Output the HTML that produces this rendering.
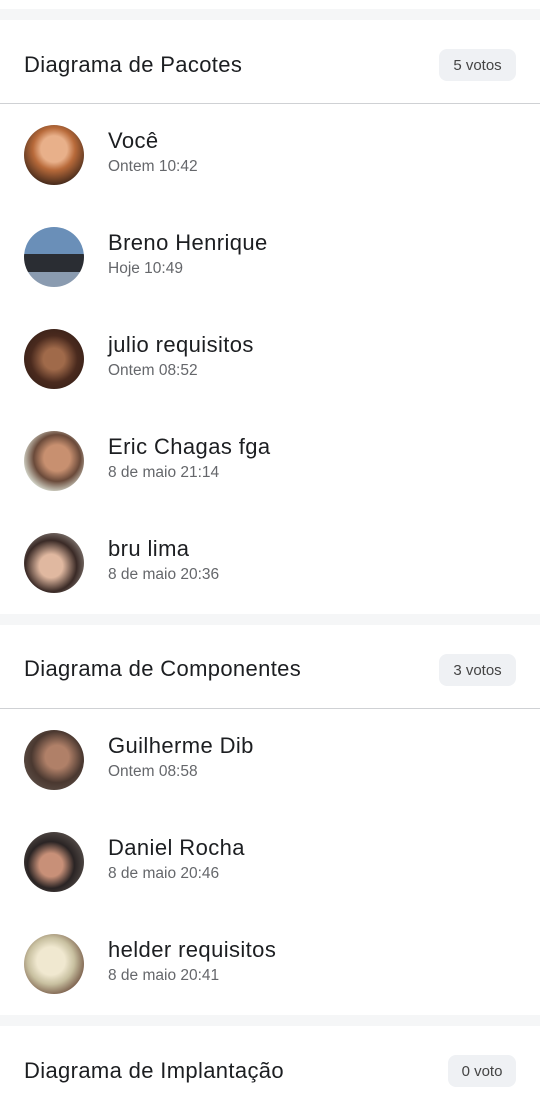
<!DOCTYPE html>
<html><head><meta charset="utf-8"><style>
*{margin:0;padding:0;box-sizing:border-box}
body{width:540px;height:1102px;background:#fff;font-family:"Liberation Sans",Roboto,sans-serif;position:relative;overflow:hidden;color:#1c1e21}
.band{position:absolute;left:0;width:540px;height:11px;background:#f5f6f7}
.hdr{position:absolute;left:24px;font-size:22px;letter-spacing:0.35px;color:#1c1e21;line-height:24px}
.badge{position:absolute;right:24px;height:32px;border-radius:8px;background:#eff1f4;font-size:15px;color:#444;line-height:33px;text-align:center}
.div{position:absolute;left:0;width:540px;height:1px;background:#cfd1d4}
.row{position:absolute;left:24px;height:60px;width:500px}
.av{position:absolute;left:0;top:0;width:60px;height:60px;border-radius:50%}
.nm{position:absolute;left:84px;top:3px;font-size:22px;letter-spacing:0.4px;color:#1c1e21;line-height:26px}
.tm{position:absolute;left:84px;top:32px;font-size:15.5px;color:#65676b;line-height:20px}
</style></head><body>
<div class="band" style="top:9px"></div>
<div class="hdr" style="top:53px">Diagrama de Pacotes</div>
<div class="badge" style="top:49px;width:77px">5 votos</div>
<div class="div" style="top:103px"></div>

<div class="row" style="top:125px"><div class="av" style="background:radial-gradient(circle at 50% 40%,#e8b08a 0 28%,#b86a3a 45%,#3a2418 80%)"></div><div class="nm">Você</div><div class="tm">Ontem 10:42</div></div>
<div class="row" style="top:227px"><div class="av" style="background:linear-gradient(#6a8fb8 0 45%,#2a2d33 45% 75%,#8a9bb0 75%)"></div><div class="nm">Breno Henrique</div><div class="tm">Hoje 10:49</div></div>
<div class="row" style="top:329px"><div class="av" style="background:radial-gradient(circle at 50% 50%,#a06a4a 0 25%,#4a2a1e 55%,#2a1a14)"></div><div class="nm">julio requisitos</div><div class="tm">Ontem 08:52</div></div>
<div class="row" style="top:431px"><div class="av" style="background:radial-gradient(circle at 55% 45%,#c89070 0 28%,#6a4a3a 50%,#d8dcd0 75%)"></div><div class="nm">Eric Chagas fga</div><div class="tm">8 de maio 21:14</div></div>
<div class="row" style="top:533px"><div class="av" style="background:radial-gradient(circle at 45% 55%,#e0b8a0 0 25%,#3a2a26 55%,#c8c4bc)"></div><div class="nm">bru lima</div><div class="tm">8 de maio 20:36</div></div>

<div class="band" style="top:614px"></div>
<div class="hdr" style="top:657px">Diagrama de Componentes</div>
<div class="badge" style="top:654px;width:77px">3 votos</div>
<div class="div" style="top:708px"></div>

<div class="row" style="top:730px"><div class="av" style="background:radial-gradient(circle at 55% 45%,#b08068 0 25%,#4a3830 55%,#6a6058)"></div><div class="nm">Guilherme Dib</div><div class="tm">Ontem 08:58</div></div>
<div class="row" style="top:832px"><div class="av" style="background:radial-gradient(circle at 45% 55%,#c89078 0 25%,#2a2424 50%,#7a7068)"></div><div class="nm">Daniel Rocha</div><div class="tm">8 de maio 20:46</div></div>
<div class="row" style="top:934px"><div class="av" style="background:radial-gradient(circle at 45% 45%,#f0e8d0 0 30%,#c8c0a0 50%,#6a4a3a 80%)"></div><div class="nm">helder requisitos</div><div class="tm">8 de maio 20:41</div></div>

<div class="band" style="top:1015px"></div>
<div class="hdr" style="top:1059px">Diagrama de Implantação</div>
<div class="badge" style="top:1055px;width:68px">0 voto</div>
</body></html>
